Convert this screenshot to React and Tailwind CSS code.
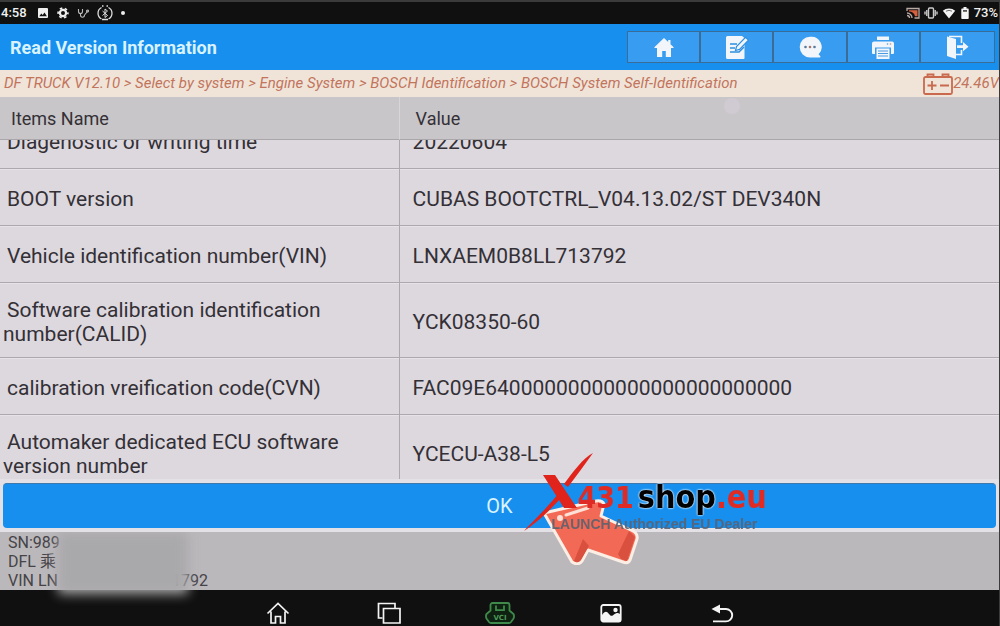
import { useLayoutEffect, useRef } from "react";

const rows = [
  { name: "Diagenostic or writing time", value: "20220604" },
  { name: "BOOT version", value: "CUBAS BOOTCTRL_V04.13.02/ST DEV340N" },
  { name: "Vehicle identification number(VIN)", value: "LNXAEM0B8LL713792" },
  { name: "Software calibration identification number(CALID)", value: "YCK08350-60" },
  { name: "calibration vreification code(CVN)", value: "FAC09E64000000000000000000000000" },
  { name: "Automaker dedicated ECU software version number", value: "YCECU-A38-L5" },
];

const path = [
  "DF TRUCK V12.10",
  "Select by system",
  "Engine System",
  "BOSCH Identification",
  "BOSCH System Self-Identification",
];

const tools = [
  {
    label: "Home",
    icon: (
      <svg viewBox="0 0 24 24" className="h-6 w-6" fill="#f2f5fa">
        <path d="M12 3 2.6 12c-.4.5-.2 1 .4 1h2v9h5.2v-6h3.6v6H19v-9h2c.6 0 .8-.5.4-1L18.5 9.200V5h-2.300v2z" />
      </svg>
    ),
  },
  {
    label: "Notes",
    icon: (
      <svg viewBox="0 0 24 24" className="h-6 w-6" fill="none">
        <path d="M2.5 1h14.500l2.500 2v20a1 1 0 0 1-1 1H2.500A1.500 1.500 0 0 1 1 22.500v-20A1.500 1.500 0 0 1 2.500 1z" fill="#f2f5fa" />
        <path d="M5 9h7M5 13h5M5 17h9l5-5" stroke="#2f8fe0" strokeWidth="1.5" />
        <path d="m10.500 15.500 1-4L20.500 2.300l3 2.800-9 9.300z" fill="#f2f5fa" stroke="#2f8fe0" strokeWidth="1.2" />
      </svg>
    ),
  },
  {
    label: "Messages",
    icon: (
      <svg viewBox="0 0 24 24" className="h-6 w-6">
        <path d="M12 1.800a10.300 10.300 0 1 0 0 20.600h9.500c1 0 1.300-.9.600-1.500l-1.500-1.600A10.300 10.300 0 0 0 12 1.800z" fill="#f2f5fa" />
        <circle cx="7.500" cy="12" r="1.300" fill="#56799b" />
        <circle cx="12" cy="12" r="1.300" fill="#a8786f" />
        <circle cx="16.500" cy="12" r="1.300" fill="#56799b" />
      </svg>
    ),
  },
  {
    label: "Print",
    icon: (
      <svg viewBox="0 0 24 24" className="h-6 w-6">
        <path d="M6 1.500h12V5H6zM3 6.500h18a2 2 0 0 1 2 2V18a1 1 0 0 1-1 1h-2v-6.500H4V19H2a1 1 0 0 1-1-1V8.500a2 2 0 0 1 2-2z" fill="#f2f5fa" />
        <path d="M5.500 13.500h13V24h-13z" fill="#f2f5fa" />
        <path d="M7 16h10M7 18.500h10M7 21h10" stroke="#4a9be0" strokeWidth="1" />
        <circle cx="16.500" cy="9" r=".8" fill="#4a9be0" />
        <circle cx="19.500" cy="9" r=".8" fill="#c98a7a" />
      </svg>
    ),
  },
  {
    label: "Exit",
    icon: (
      <svg viewBox="0 0 24 24" className="h-6 w-6" fill="none">
        <path d="M2 1.500 11 4v20l-9-3z" fill="#f2f5fa" />
        <path d="M4 1.500h12.500V8M16.500 15v4.500H11" stroke="#f2f5fa" strokeWidth="1.6" />
        <path d="M12 10.300h6V7l5.500 4.700-5.500 4.600V13h-6z" fill="#f2f5fa" />
      </svg>
    ),
  },
];

const navItems = [
  {
    label: "Home screen",
    icon: (
      <svg viewBox="0 0 24 24" className="h-6 w-6" fill="none" stroke="#f4f4f4" strokeWidth="1.7">
        <path d="M1.500 12.500 12 2.500l10.500 10M5 10.500V22h4.500v-6.500h5V22H19V10.500" />
      </svg>
    ),
  },
  {
    label: "Recent apps",
    icon: (
      <svg viewBox="0 0 24 24" className="h-6 w-6" fill="none" stroke="#f4f4f4" strokeWidth="1.7">
        <path d="M5.500 17H1.500V2.500H18V7" />
        <path d="M6.500 7.500H23V22H6.500z" />
      </svg>
    ),
  },
  {
    label: "VCI",
    icon: (
      <svg viewBox="0 0 30 24" className="h-6 w-[30px]" fill="none" stroke="#3f8a4b" strokeWidth="1.8">
        <path d="M7.500 2h15a2 2 0 0 1 2 2v5.500l4 3.500c.7 1.500.7 3 0 4.500l-2.500 3.500a3 3 0 0 1-2 1H6a3 3 0 0 1-2-1l-2.500-3.500c-.7-1.500-.7-3 0-4.500l4-3.500V4a2 2 0 0 1 2-2z" fill="#0f2212" />
        <path d="M11 4.500v4.700h8V4.500" />
        <text x="15" y="18.500" textAnchor="middle" fontSize="7" fontWeight="700" stroke="none" fill="#4d9958" className="font-['DejaVu_Sans']">
          VCI
        </text>
      </svg>
    ),
  },
  {
    label: "Screenshot",
    icon: (
      <svg viewBox="0 0 24 24" className="h-6 w-6">
        <rect x="2.300" y="4" width="19.400" height="16.500" rx="2" fill="#111" stroke="#f4f4f4" strokeWidth="1.8" />
        <path d="M3 14c3-4 4.500-4 7-1 2 2.400 3 2.400 5 .5 2.500-2 4-2 6-.5v7H3z" fill="#f4f4f4" />
        <circle cx="16.500" cy="9" r="2.200" fill="#f4f4f4" />
      </svg>
    ),
  },
  {
    label: "Back",
    icon: (
      <svg viewBox="0 0 24 24" className="h-6 w-6" fill="none">
        <path d="M8 8h8a6.200 6.200 0 0 1 0 12.400H3" stroke="#f4f4f4" strokeWidth="1.9" />
        <path d="M1.500 8 10 3.500v9z" fill="#f4f4f4" />
      </svg>
    ),
  },
];

function StatusBar() {
  return (
    <div className="flex h-6 shrink-0 items-center justify-between border-t-2 border-[#3b3b3b] bg-[#101010] px-px text-[13px] leading-4 font-medium text-[#f0f0f0]">
      <div className="flex items-center gap-2">
        <span className="w-7">4:58</span>
        <svg viewBox="0 0 12 12" className="h-3 w-3">
          <rect x="1" y="1" width="10" height="10" rx="1" fill="#eee" />
          <path d="m2.300 9.200 2-2.700 1.400 1.600 1.800-2.500 2.400 3.600z" fill="#111" />
        </svg>
        <svg viewBox="0 0 12 12" className="h-3 w-3" fill="none" stroke="#eee">
          <circle cx="6" cy="6" r="3.1" strokeWidth="2.2" />
          <circle cx="6" cy="6" r="4.9" strokeWidth="1.6" strokeDasharray="2.56" strokeDashoffset="1.3" />
        </svg>
        <svg viewBox="0 0 12 12" className="h-3 w-3" fill="none" stroke="#bbb" strokeWidth="1.1">
          <path d="M1.500 2v2.500a2 2 0 0 0 4 0V2M3.500 6.500V8c0 3 4 3 4 0M7.500 8l3-3.500" />
          <circle cx="10.500" cy="4" r="1" />
        </svg>
        <svg viewBox="0 0 16 16" className="h-4 w-4" fill="none" stroke="#ddd" strokeWidth="1.3">
          <path d="M4.500 2.500a6.500 6.500 0 0 0 0 11.500M11.500 2.500a6.500 6.500 0 0 1 0 11.500M5 14.500h6" />
          <path d="m5.500 6 5 4.500L8 12.500V4l2.500 2-5 4.500" strokeWidth="1" />
          <path d="M5 1h1.500M9.500 1H11" strokeWidth="1.5" />
        </svg>
        <span className="h-1 w-1 rounded-full bg-[#eee]" />
      </div>
      <div className="flex items-center gap-1">
        <svg viewBox="0 0 14 12" className="h-3 w-[14px]" fill="none" stroke="#b9a9a4" strokeWidth="1.3">
          <path d="M1 4V1.500h12v9.500H8.500" />
          <path d="M3 3.300h8.500v6H9C8.500 6.500 6 4.500 3 4.500z" fill="#d9603f" stroke="none" />
          <path d="M1 6a5 5 0 0 1 5 5M1 8.500A2.500 2.500 0 0 1 3.500 11" />
        </svg>
        <svg viewBox="0 0 14 12" className="h-3 w-[14px]" fill="none" stroke="#ccc" strokeWidth="1.4">
          <rect x="4.500" y="1" width="5" height="10" rx="1" />
          <path d="M2.800 3v6M11.200 3v6M1 4.500v3M13 4.500v3" />
        </svg>
        <svg viewBox="0 0 14 12" className="h-3 w-[14px]" fill="#f4f4f4">
          <path d="M7 11.500.8 3.800a9.500 9.500 0 0 1 12.400 0z" />
          <path d="M4 4.200a6 6 0 0 1 6 0" stroke="#111" strokeWidth=".6" fill="none" />
        </svg>
        <svg viewBox="0 0 10 14" className="h-[14px] w-[10px]" fill="#f4f4f4">
          <path d="M3.500 1h3v1.500H8a.7.7 0 0 1 .7.700v9a.8.8 0 0 1-.8.800H2.100a.8.8 0 0 1-.8-.8v-9A.7.7 0 0 1 2 2.500h1.500z" />
          <path d="M3 4h4v1.800H3z" fill="#555" />
        </svg>
        <span>73%</span>
      </div>
    </div>
  );
}

function TitleBar() {
  return (
    <header className="flex h-[46px] shrink-0 items-center justify-between bg-[#168fee] pr-1 pl-[10px]">
      <h1 className="text-[18px] font-bold text-[#d9f3ff]">Read Version Information</h1>
      <div className="grid h-8 w-[368px] grid-cols-5 border border-[#3a6c98] bg-[#389df0]">
        {tools.map((tool) => (
          <button
            key={tool.label}
            aria-label={tool.label}
            className="flex items-center justify-center border-r-2 border-[#3a6c98] last:border-r-0"
          >
            {tool.icon}
          </button>
        ))}
      </div>
    </header>
  );
}

function Breadcrumb() {
  return (
    <div className="flex h-[27px] shrink-0 items-center justify-between overflow-hidden bg-[#f0e4d9] pl-1 text-[15px] text-[#c2745c] italic">
      <nav className="whitespace-nowrap">{path.join(" > ")}</nav>
      <div className="flex items-center">
        <svg viewBox="0 0 30 22" className="h-[22px] w-[30px]" fill="none" stroke="#c9694e" strokeWidth="1.8">
          <rect x="1" y="4" width="28" height="17" rx="1.500" />
          <path d="M4.500 3V1.500h6V3M19.500 3V1.500h6V3M4.500 12.500h9M9 8v9M17 12.500h9" />
        </svg>
        <span>24.46V</span>
      </div>
    </div>
  );
}

function VersionTable() {
  const scroller = useRef(null);

  // keep the list scrolled a little, the header stays in place
  useLayoutEffect(() => {
    scroller.current.scrollTop = 28;
  }, []);

  return (
    <div ref={scroller} className="min-h-0 flex-1 overflow-y-auto bg-[#ddd8de] [scrollbar-width:none]">
      <table className="w-full table-fixed border-separate border-spacing-0 text-left text-[#333036]">
        <thead className="sticky top-0 z-10">
          <tr className="h-[43px] bg-[#c9c6c9] text-[18px]">
            <th className="w-2/5 border-r border-b border-r-[#d8d5d8] border-b-[#aaa7ab] pl-[11px] font-normal">Items Name</th>
            <th className="relative border-b border-[#aaa7ab] pl-4 font-normal">
              Value
              {/* touch point */}
              <span className="absolute top-px left-[324px] h-4 w-4 rounded-full bg-[#d0cad2]" />
            </th>
          </tr>
        </thead>
        <tbody className="text-[21px] leading-6">
          {rows.map((row) => (
            <tr key={row.name} className="h-[57px]">
              <td className="border-r border-b border-[#aca8ae] pt-[15px] pr-10 pb-[11px] pl-[3px] shadow-[inset_0_1px_#e6e2e7]">
                <p className="indent-1">{row.name}</p>
              </td>
              <td className="border-b border-[#aca8ae] pt-[15px] pb-[11px] pl-[13px] shadow-[inset_0_1px_#e6e2e7]">{row.value}</td>
            </tr>
          ))}
        </tbody>
      </table>
    </div>
  );
}

function ShopLogo() {
  return (
    <div className="pointer-events-none absolute -top-7 left-1/2 ml-6 h-[114px] w-[250px]">
      <svg viewBox="0 0 250 114" className="absolute inset-0 h-full w-full">
        <path
          d="M20 62 72 50q6-1 8 3l-3 12 32 15q5 3 4 8l-7 21q-2 4-7 2L64 99l-6 11q-4 5-10 1z"
          fill="#f26a55"
          stroke="#fbeee4"
          strokeWidth="3"
          strokeLinejoin="round"
        />
        <path d="m59 88 6 7-8 14q-3 4-7 1zM105 80l6 6-8 24-6-2-3-5z" fill="#d9503f" />
        <path d="m42 64 22-7" stroke="#fde0d6" strokeWidth="3" strokeLinecap="round" />
        <circle cx="36" cy="67" r="3" fill="#fde0d6" />
        <path d="M19 24h12l22 33H40z" fill="#e0241c" />
        <path d="M69 2C59 7 49 21 40 33l4 3C53 24 62 12 69 2zM34 43C22 58 10 69 0 80c14-9 27-22 38-34z" fill="#e0241c" />
      </svg>
      <div className="absolute top-7 left-[54px] text-[30px] leading-9 font-bold whitespace-nowrap text-[#e02b25] font-['DejaVu_Sans_Condensed','DejaVu_Sans',sans-serif]">
        431
        <span className="ml-1 text-[32px] text-black [text-shadow:0_0_2px_#fff,0_0_2px_#fff]">shop</span>
        <span className="text-[32px]">.eu</span>
      </div>
      <div className="absolute top-[63px] left-7 text-[14px] leading-5 font-bold whitespace-nowrap text-[#5b6270] opacity-90 font-['Liberation_Sans',Arial,sans-serif]">
        LAUNCH Authorized EU Dealer
      </div>
    </div>
  );
}

function ConfirmBar() {
  return (
    <div className="relative z-30 shrink-0 bg-[#e4e1e6] px-[3px] py-1">
      <button className="h-[45px] w-full rounded border-t border-[#3f78ad] bg-[#168fee] text-[20px] text-[#d9f3ff]">OK</button>
      <ShopLogo />
    </div>
  );
}

function VehicleInfo() {
  return (
    <footer className="relative z-20 h-[58px] shrink-0 bg-[#bbb8bc] pt-px pl-2 text-[16px] leading-[19px] text-[#454347]">
      <p>SN:989</p>
      <p>DFL 乘</p>
      <p className="flex w-[200px] justify-between">
        <span>VIN LN</span>
        <span>1792</span>
      </p>
      <div className="absolute top-0 left-[58px] h-[62px] w-[130px] bg-[#a9a8aa] blur-[6px]" />
    </footer>
  );
}

function NavBar() {
  return (
    <div className="h-9 shrink-0 bg-[#101010] pt-[11px]">
      <div className="mx-auto grid w-[555px] grid-cols-5">
        {navItems.map((item) => (
          <button key={item.label} aria-label={item.label} className="flex justify-center">
            {item.icon}
          </button>
        ))}
      </div>
    </div>
  );
}

export default function App() {
  return (
    <div className="flex h-screen flex-col overflow-hidden border-r border-[#3b3b3b] bg-[#101010] font-[Roboto,'Noto_Sans_CJK_SC',sans-serif]">
      <StatusBar />
      <TitleBar />
      <Breadcrumb />
      <VersionTable />
      <ConfirmBar />
      <VehicleInfo />
      <NavBar />
    </div>
  );
}
